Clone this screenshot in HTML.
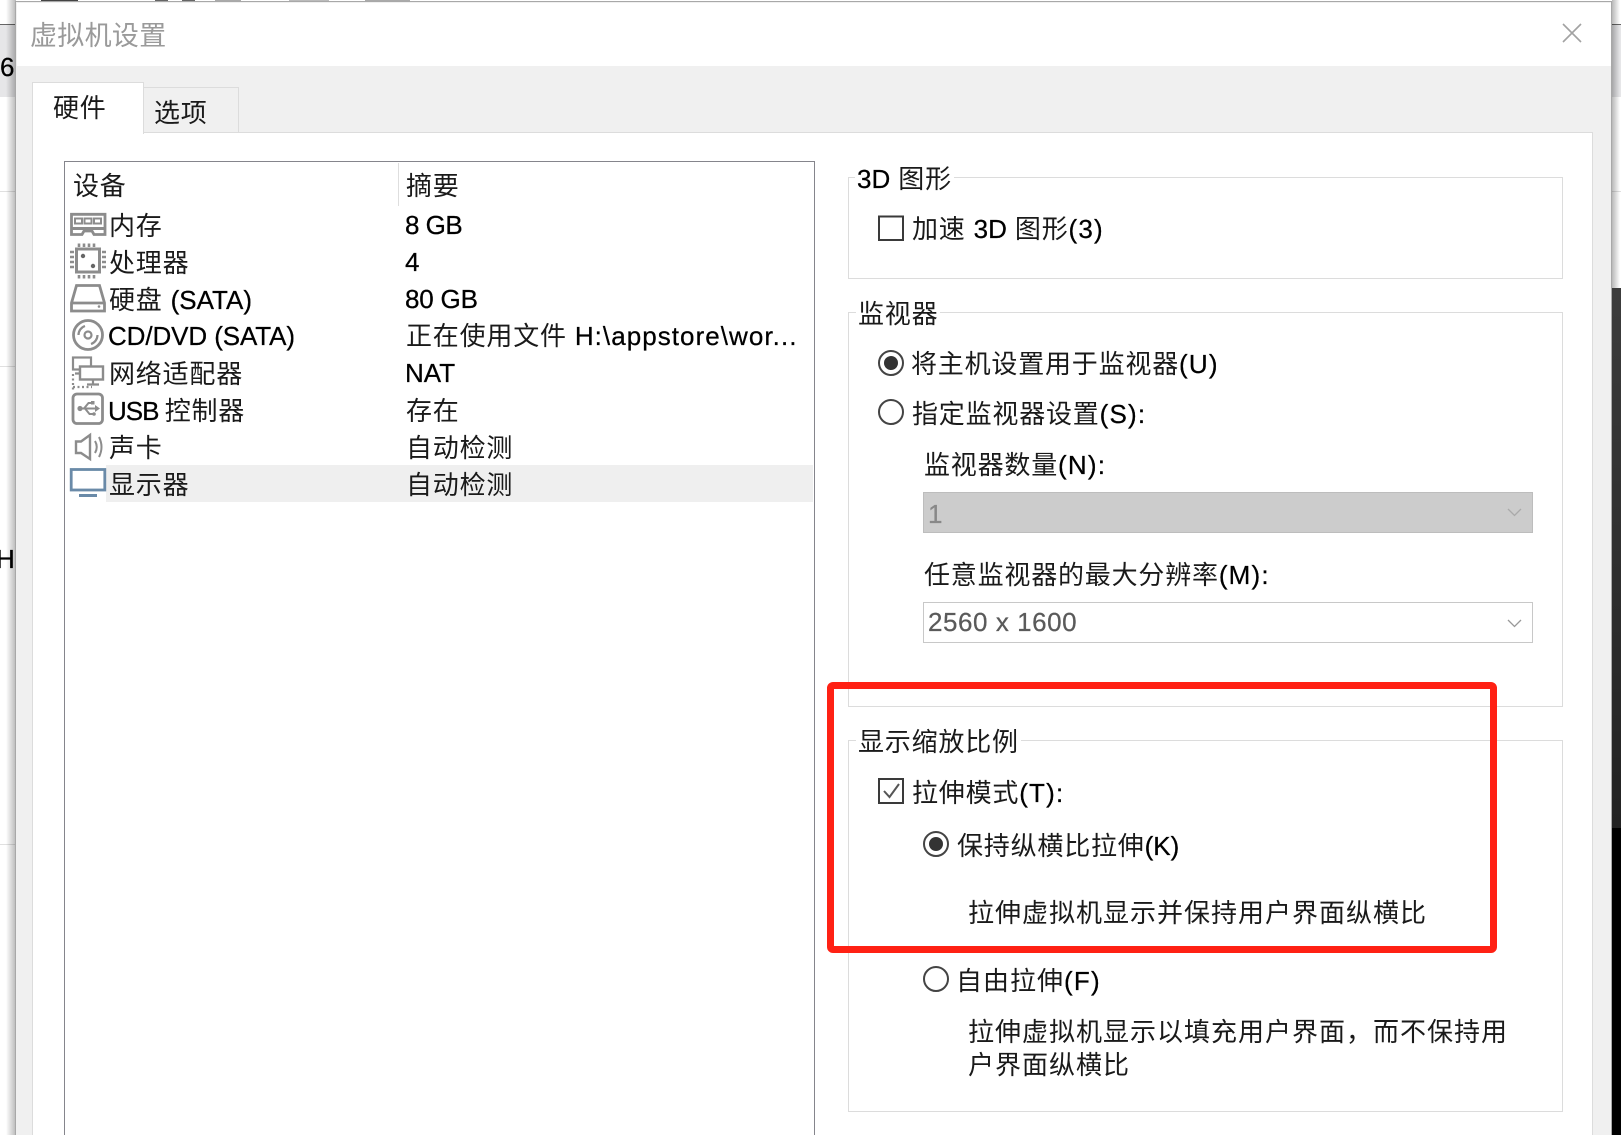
<!DOCTYPE html>
<html lang="zh-CN"><head><meta charset="utf-8"><title>虚拟机设置</title>
<style>
html,body{margin:0;padding:0;width:1621px;height:1135px;overflow:hidden;background:#fff}
body{position:relative;font-family:"Liberation Sans","Noto Sans CJK SC",sans-serif;font-size:26px;color:#111}
div{position:absolute;box-sizing:border-box}
.t{white-space:pre;line-height:36px;height:36px;letter-spacing:.8px;font-weight:400;color:#1a1a1a}
.t i{font-style:normal;font-size:26px;letter-spacing:0;color:#000;-webkit-text-stroke:.25px currentColor}
.t i.p{letter-spacing:1.2px}
.g{border:1.5px solid #dcdcdc;background:#fff}
.lg{background:#fff;padding:0 2px}
</style></head><body>

<!-- background behind dialog -->
<div style="left:0;top:24px;width:1621px;height:1.5px;background:#666"></div>
<div style="left:0;top:25px;width:1621px;height:72px;background:#e6e6e8"></div>
<div style="left:0;top:191px;width:1621px;height:1px;background:#e0e0e0"></div>
<div style="left:0;top:366px;width:16px;height:1px;background:#e0e0e0"></div>
<div style="left:0;top:844px;width:16px;height:1px;background:#e0e0e0"></div>
<div class="t" style="left:0;top:49px;color:#000;letter-spacing:0"><i>6</i></div>
<div class="t" style="left:-4px;top:541px;color:#000;letter-spacing:0"><i>H</i></div>
<div style="left:1611px;top:288px;width:10px;height:540px;background:linear-gradient(#3c3c3c,#222)"></div>
<div style="left:1611px;top:828px;width:10px;height:307px;background:#000"></div>
<!-- shadows -->
<div style="left:6px;top:0;width:10px;height:1135px;background:linear-gradient(90deg,rgba(0,0,0,0),rgba(0,0,0,.28))"></div>
<div style="left:1612px;top:0;width:8px;height:288px;background:linear-gradient(90deg,rgba(0,0,0,.28),rgba(0,0,0,0))"></div>
<!-- top strip -->
<div style="left:41px;top:0;width:37px;height:1px;background:#444"></div>
<div style="left:155px;top:0;width:13px;height:1px;background:#666"></div>
<div style="left:182px;top:0;width:13px;height:1px;background:#666"></div>
<div style="left:215px;top:0;width:26px;height:1px;background:#aaa"></div>
<div style="left:289px;top:0;width:40px;height:1px;background:#bbb"></div>
<div style="left:365px;top:0;width:45px;height:1px;background:#aaa"></div>

<!-- dialog -->
<div style="left:15px;top:1px;width:1597px;height:1134px;background:#f0f0f0;border:1.5px solid #a8a8a8;border-bottom:0"></div>
<div style="left:16.5px;top:2.5px;width:1594px;height:63.5px;background:#fff"></div>
<div class="t" style="left:30px;top:18px;color:#9a9a9a;font-size:27px;letter-spacing:.3px">虚拟机设置</div>
<svg style="position:absolute;left:0;top:0" width="1621" height="1135">
<path d="M1563 24L1581 42M1581 24L1563 42" stroke="#a2a2a2" stroke-width="1.6" fill="none"/>
</svg>

<!-- tabs & panel -->
<div style="left:143px;top:87px;width:95.5px;height:46px;background:#f0f0f0;border:1.5px solid #dcdcdc"></div>
<div style="left:32px;top:132px;width:1561px;height:1003px;background:#fff;border:1.5px solid #dcdcdc;border-bottom:0"></div>
<div style="left:32px;top:82px;width:112px;height:52px;background:#fff;border:1.5px solid #dcdcdc;border-bottom:0"></div>
<div class="t" style="left:53px;top:90px">硬件</div>
<div class="t" style="left:154px;top:95px">选项</div>

<!-- list -->
<div style="left:64px;top:161px;width:750.5px;height:974px;background:#fff;border:1.5px solid #85858c;border-bottom:0"></div>
<div style="left:398px;top:163px;width:1px;height:43px;background:#dedede"></div>
<div style="left:106px;top:465px;width:707px;height:37px;background:#efefef"></div>

<div class="t" style="left:73px;top:168px">设备</div>
<div class="t" style="left:406px;top:168px">摘要</div>

<div class="t" style="left:109px;top:208px">内存</div>
<div class="t" style="left:405px;top:207px"><i style="letter-spacing:-.5px">8 GB</i></div>
<div class="t" style="left:109px;top:245px">处理器</div>
<div class="t" style="left:405px;top:244px"><i>4</i></div>
<div class="t" style="left:109px;top:282px">硬盘 <i>(SATA)</i></div>
<div class="t" style="left:405px;top:281px"><i style="letter-spacing:-.2px">80 GB</i></div>
<div class="t" style="left:108px;top:318px"><i style="letter-spacing:-.1px">CD/DVD (SATA)</i></div>
<div class="t" style="left:406px;top:318px">正在使用文件 <i style="letter-spacing:1.05px">H:\appstore\wor...</i></div>
<div class="t" style="left:109px;top:356px">网络适配器</div>
<div class="t" style="left:405px;top:355px"><i>NAT</i></div>
<div class="t" style="left:108px;top:393px"><i style="letter-spacing:-1px">USB </i>控制器</div>
<div class="t" style="left:406px;top:393px">存在</div>
<div class="t" style="left:109px;top:430px">声卡</div>
<div class="t" style="left:406px;top:430px">自动检测</div>
<div class="t" style="left:109px;top:467px">显示器</div>
<div class="t" style="left:406px;top:467px">自动检测</div>

<!-- icons -->
<svg style="position:absolute;left:0;top:0" width="1621" height="1135" fill="none">
<g stroke="#8c8c8c" stroke-width="2">
<!-- memory -->
<path d="M71.500 214.300H105V234.500H94L92 231H84L82 234.500H71.500Z" stroke-width="2.800"/>
<path d="M71 228.500H105" stroke-width="3"/>
<rect x="75" y="218.500" width="7" height="5" stroke-width="2"/><rect x="84.500" y="218.500" width="7" height="5" stroke-width="2"/><rect x="94" y="218.500" width="7" height="5" stroke-width="2"/>
<!-- cpu -->
<rect x="76.500" y="249" width="23" height="23" stroke-width="3"/>
<path d="M79 243.500V247M84 243.500V247M89 243.500V247M94 243.500V247M79 275V278.500M84 275V278.500M89 275V278.500M94 275V278.500M70 252H74M70 257H74M70 262H74M70 267H74M102 252H106M102 257H106M102 262H106M102 267H106" stroke-width="2.600"/>
<circle cx="83" cy="256" r="2.200" fill="#666" stroke="none"/><circle cx="93" cy="266" r="2.200" fill="#666" stroke="none"/>
<!-- hdd -->
<path d="M71.500 311V303L76.500 285.500H99.500L104.500 303V311ZM71 303H105" stroke-width="2.800"/>
<circle cx="99" cy="306.500" r="1.300" fill="#8c8c8c" stroke="none"/>
<!-- cd -->
<circle cx="88" cy="335" r="14.500" stroke-width="2.800"/><circle cx="88" cy="335" r="3.500" stroke-width="2.200"/>
<path d="M78.500 335A9.500 9.500 0 0 1 85 326M97.500 335A9.500 9.500 0 0 1 91 344" stroke-width="2.200"/>
<!-- network -->
<rect x="73" y="357.500" width="18" height="12" stroke-width="2.200"/>
<path d="M80 369.500V373M75 373.500H86" stroke-width="2.200"/>
<rect x="80" y="366.500" width="23" height="13" fill="#fff" stroke-width="2.400"/>
<path d="M93 380V384M87 384.500H99" stroke-width="2.200"/>
<path d="M73 374V391M73 387H92" stroke-width="2.200" stroke-dasharray="2 2.500"/>
<!-- usb -->
<rect x="73" y="394" width="29.500" height="29.500" rx="4" stroke-width="2.800"/>
<path d="M80 408.500H96M84 408.500L88.500 403H92M85 408.500L89.500 414H93" stroke-width="2"/>
<circle cx="80" cy="408.500" r="2.600" fill="#8c8c8c" stroke="none"/>
<path d="M95 405L100 408.500L95 412Z" fill="#8c8c8c" stroke="none"/>
<rect x="91" y="401" width="3.500" height="3.500" fill="#8c8c8c" stroke="none"/>
<circle cx="94" cy="414" r="1.800" fill="#8c8c8c" stroke="none"/>
<!-- speaker -->
<path d="M76 441.500V453H81L90 459V435L81 441.500Z" stroke-width="2.400"/>
<path d="M95 441Q98.500 447 95 453M99 437Q104 447 99 457" stroke-width="2"/>
<!-- display -->
<rect x="71.200" y="469.500" width="33.600" height="20.500" stroke="#6a8aa8" stroke-width="2.800"/>
<rect x="79" y="494" width="18" height="3" fill="#6a8aa8" stroke="none"/>
</g>
</svg>

<!-- group 3D -->
<div class="g" style="left:848px;top:177px;width:715px;height:102px"></div>
<div class="lg t" style="left:855px;top:161px"><i>3D</i> 图形</div>
<div class="t" style="left:912px;top:211px">加速 <i>3D</i> 图形<i class="p">(3)</i></div>

<!-- group monitor -->
<div class="g" style="left:848px;top:312px;width:715px;height:395px"></div>
<div class="lg t" style="left:856px;top:296px">监视器</div>
<div class="t" style="left:911px;top:346px">将主机设置用于监视器<i class="p">(U)</i></div>
<div class="t" style="left:912px;top:396px">指定监视器设置<i class="p">(S):</i></div>
<div class="t" style="left:924px;top:447px">监视器数量<i class="p">(N):</i></div>
<div style="left:923px;top:492px;width:610px;height:41px;background:#ccc;border:1.5px solid #bdbdbd"></div>
<div class="t" style="left:928px;top:496px"><i style="color:#888">1</i></div>
<div class="t" style="left:924px;top:557px">任意监视器的最大分辨率<i class="p">(M):</i></div>
<div style="left:923px;top:602px;width:610px;height:41px;background:#fff;border:1.5px solid #c8c8c8"></div>
<div class="t" style="left:928px;top:604px"><i style="color:#5a5a5a;letter-spacing:.55px">2560 x 1600</i></div>

<!-- group scale -->
<div class="g" style="left:848px;top:740px;width:715px;height:372px"></div>
<div class="lg t" style="left:856px;top:724px">显示缩放比例</div>
<div class="t" style="left:912px;top:775px">拉伸模式<i class="p">(T):</i></div>
<div class="t" style="left:957px;top:828px">保持纵横比拉伸<i>(K)</i></div>
<div class="t" style="left:968px;top:895px;letter-spacing:1px">拉伸虚拟机显示并保持用户界面纵横比</div>
<div class="t" style="left:956px;top:963px;letter-spacing:1px">自由拉伸<i class="p">(F)</i></div>
<div class="t" style="left:968px;top:1014px;letter-spacing:1px">拉伸虚拟机显示以填充用户界面，而不保持用</div>
<div class="t" style="left:968px;top:1047px;letter-spacing:1px">户界面纵横比</div>

<svg style="position:absolute;left:0;top:0" width="1621" height="1135" fill="none">
<!-- checkboxes -->
<rect x="879" y="216.500" width="24" height="23.500" stroke="#3a3a3a" stroke-width="2"/>
<rect x="879" y="779" width="24" height="24" stroke="#3a3a3a" stroke-width="2"/>
<path d="M884 791L889.500 797L899 784" stroke="#555" stroke-width="2"/>
<!-- radios -->
<circle cx="891" cy="363" r="12" stroke="#444" stroke-width="2"/><circle cx="891" cy="363" r="7" fill="#333"/>
<circle cx="891" cy="412" r="12" stroke="#444" stroke-width="2"/>
<circle cx="936" cy="844" r="12" stroke="#444" stroke-width="2"/><circle cx="936" cy="844" r="7" fill="#333"/>
<circle cx="936" cy="979" r="12" stroke="#444" stroke-width="2"/>
<!-- combo arrows -->
<path d="M1508 509L1514.500 515.500L1521 509" stroke="#aaa" stroke-width="1.300"/>
<path d="M1508 620L1514.500 626.500L1521 620" stroke="#999" stroke-width="1.300"/>
</svg>

<!-- red highlight -->
<div style="left:827px;top:682px;width:670px;height:271px;border:7px solid #ff2114;border-radius:6px"></div>
</body></html>
